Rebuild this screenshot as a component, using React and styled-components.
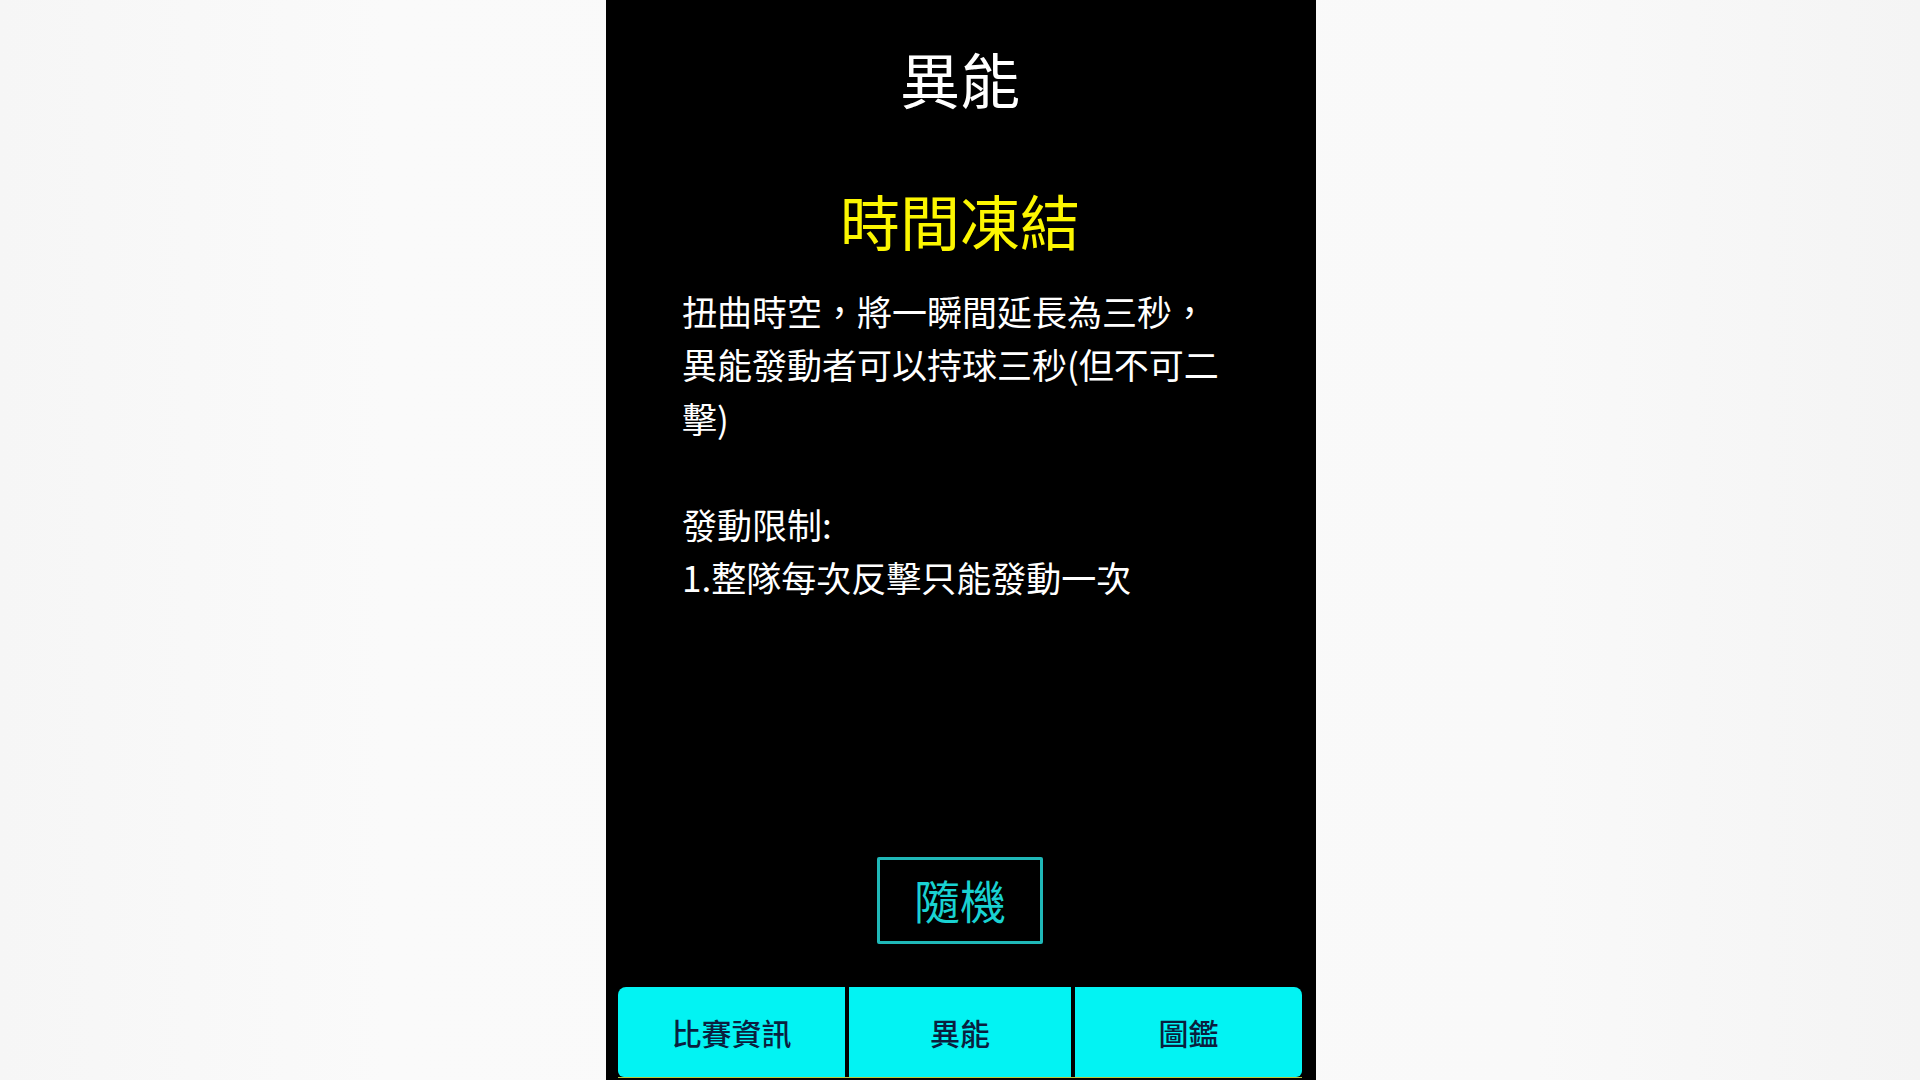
import React from "react";
import styled, { createGlobalStyle } from "styled-components";

const Global = createGlobalStyle`
  html, body {
    margin: 0;
    padding: 0;
    height: 100%;
    background: #f8f8f8;
  }
  #root {
    height: 100%;
  }
  * { box-sizing: border-box; }
`;

const Page = styled.div`
  height: 1080px;
  width: 1920px;
  display: flex;
  justify-content: center;
  background: linear-gradient(90deg, #f6f6f6 0%, #fafafa 20%, #f9f9f9 80%, #f4f4f4 100%);
  font-family: "Noto Sans CJK TC", "Noto Sans CJK SC", "Noto Sans", sans-serif;
  overflow: hidden;
`;

const Phone = styled.div`
  width: 710px;
  height: 1080px;
  margin-left: 2px;
  background: #000;
  display: flex;
  flex-direction: column;
  align-items: center;
  padding: 0 14px 2px 12px;
`;

const Title = styled.h1`
  margin: 42px 0 0;
  font-size: 60px;
  line-height: 72px;
  font-weight: 400;
  color: #ffffff;
`;

const AbilityName = styled.h2`
  margin: 70px 0 0;
  font-size: 60px;
  line-height: 72px;
  font-weight: 400;
  color: #fcf600;
`;

const Description = styled.p`
  align-self: stretch;
  margin: 28px 0 0;
  padding: 0 62px 0 64px;
  font-size: 35px;
  line-height: 53.3px;
  color: #ffffff;
  white-space: pre-wrap;
`;

const RandomButton = styled.button`
  margin-top: auto;
  width: 166px;
  height: 87px;
  background: #000;
  border: 3px solid #1fb8b8;
  border-radius: 2px;
  color: #19d2d2;
  font-family: inherit;
  font-size: 46px;
  line-height: 1;
  padding: 0 0 4px;
  display: flex;
  align-items: center;
  justify-content: center;
  cursor: pointer;
`;

const TabBar = styled.nav`
  align-self: stretch;
  margin-top: 43px;
  height: 91px;
  display: grid;
  grid-template-columns: 227fr 222fr 227fr;
  gap: 4px;
  border-bottom: 1px solid #b9c640;
`;

const Tab = styled.button`
  border: none;
  background: #02f3f3;
  color: #0a1f3f;
  font-family: inherit;
  font-size: 30px;
  font-weight: 500;
  line-height: 1;
  display: flex;
  align-items: center;
  justify-content: center;
  padding: 0;
  border-radius: ${(p) => (p.$pos === "first" ? "8px 0 0 6px" : p.$pos === "last" ? "0 8px 6px 0" : "0")};
  cursor: pointer;
`;

const desc = `扭曲時空，將一瞬間延長為三秒，異能發動者可以持球三秒(但不可二擊)

發動限制:
1.整隊每次反擊只能發動一次`;

export default function App() {
  return (
    <>
      <Global />
      <Page>
        <Phone>
          <Title>異能</Title>
          <AbilityName>時間凍結</AbilityName>
          <Description>{desc}</Description>
          <RandomButton>隨機</RandomButton>
          <TabBar>
            <Tab $pos="first">比賽資訊</Tab>
            <Tab>異能</Tab>
            <Tab $pos="last">圖鑑</Tab>
          </TabBar>
        </Phone>
      </Page>
    </>
  );
}
